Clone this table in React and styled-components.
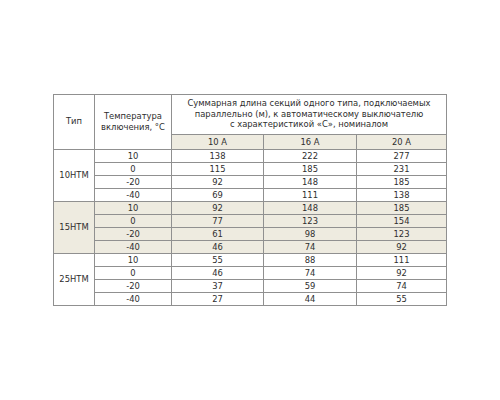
import React from "react";
import styled, { createGlobalStyle } from "styled-components";

const GlobalStyle = createGlobalStyle`
  html, body {
    margin: 0;
    padding: 0;
    background: #ffffff;
  }
`;

const groups = [
  { type: "10НТМ", shaded: false, rows: [["10", 138, 222, 277], ["0", 115, 185, 231], ["-20", 92, 148, 185], ["-40", 69, 111, 138]] },
  { type: "15НТМ", shaded: true, rows: [["10", 92, 148, 185], ["0", 77, 123, 154], ["-20", 61, 98, 123], ["-40", 46, 74, 92]] },
  { type: "25НТМ", shaded: false, rows: [["10", 55, 88, 111], ["0", 46, 74, 92], ["-20", 37, 59, 74], ["-40", 27, 44, 55]] },
];

export default function App() {
  return (
    <>
      <GlobalStyle />
      <Page>
        <Table>
          <colgroup>
            <col style={{ width: 41 }} />
            <col style={{ width: 77 }} />
            <col style={{ width: 92 }} />
            <col style={{ width: 93 }} />
            <col style={{ width: 90 }} />
          </colgroup>
          <thead>
            <tr>
              <HeadCell rowSpan={2}>Тип</HeadCell>
              <HeadCell rowSpan={2}>Температура включения, °C</HeadCell>
              <HeadCell colSpan={3} $tall>
                Суммарная длина секций одного типа, подключаемых<br />
                параллельно (м), к автоматическому выключателю<br />
                с характеристикой «С», номиналом
              </HeadCell>
            </tr>
            <tr>
              <SubCell>10 А</SubCell>
              <SubCell>16 А</SubCell>
              <SubCell>20 А</SubCell>
            </tr>
          </thead>
          <tbody>
            {groups.map((g) =>
              g.rows.map((r, i) => (
                <tr key={g.type + i}>
                  {i === 0 && (
                    <Cell rowSpan={4} $shaded={g.shaded}>{g.type}</Cell>
                  )}
                  {r.map((v, j) => (
                    <Cell key={j} $shaded={g.shaded}>{v}</Cell>
                  ))}
                </tr>
              ))
            )}
          </tbody>
        </Table>
      </Page>
    </>
  );
}

const Page = styled.div`
  width: 500px;
  height: 400px;
  display: flex;
  align-items: center;
  justify-content: center;
`;

const Table = styled.table`
  border-collapse: collapse;
  table-layout: fixed;
  width: 394px;
  border: 1.5px solid #8c8c8c;
  font-family: "DejaVu Sans", Verdana, sans-serif;
  font-size: 8.4px;
  color: #2e2e2e;
  margin-bottom: 1px;
`;

const HeadCell = styled.th`
  font-weight: normal;
  border: 1px solid #909090;
  text-align: center;
  vertical-align: middle;
  padding: 0 3px;
  height: ${(p) => (p.$tall ? "39px" : "auto")};
  line-height: 10.5px;
  background: #ffffff;
`;

const SubCell = styled.th`
  font-weight: normal;
  border: 1px solid #909090;
  text-align: center;
  height: 14px;
  padding: 0;
  background: #eeebe0;
  line-height: 14px;
`;

const Cell = styled.td`
  border: 1px solid #909090;
  text-align: center;
  vertical-align: middle;
  height: 12px;
  padding: 0;
  line-height: 12px;
  background: ${(p) => (p.$shaded ? "#eeebe0" : "#ffffff")};
`;
